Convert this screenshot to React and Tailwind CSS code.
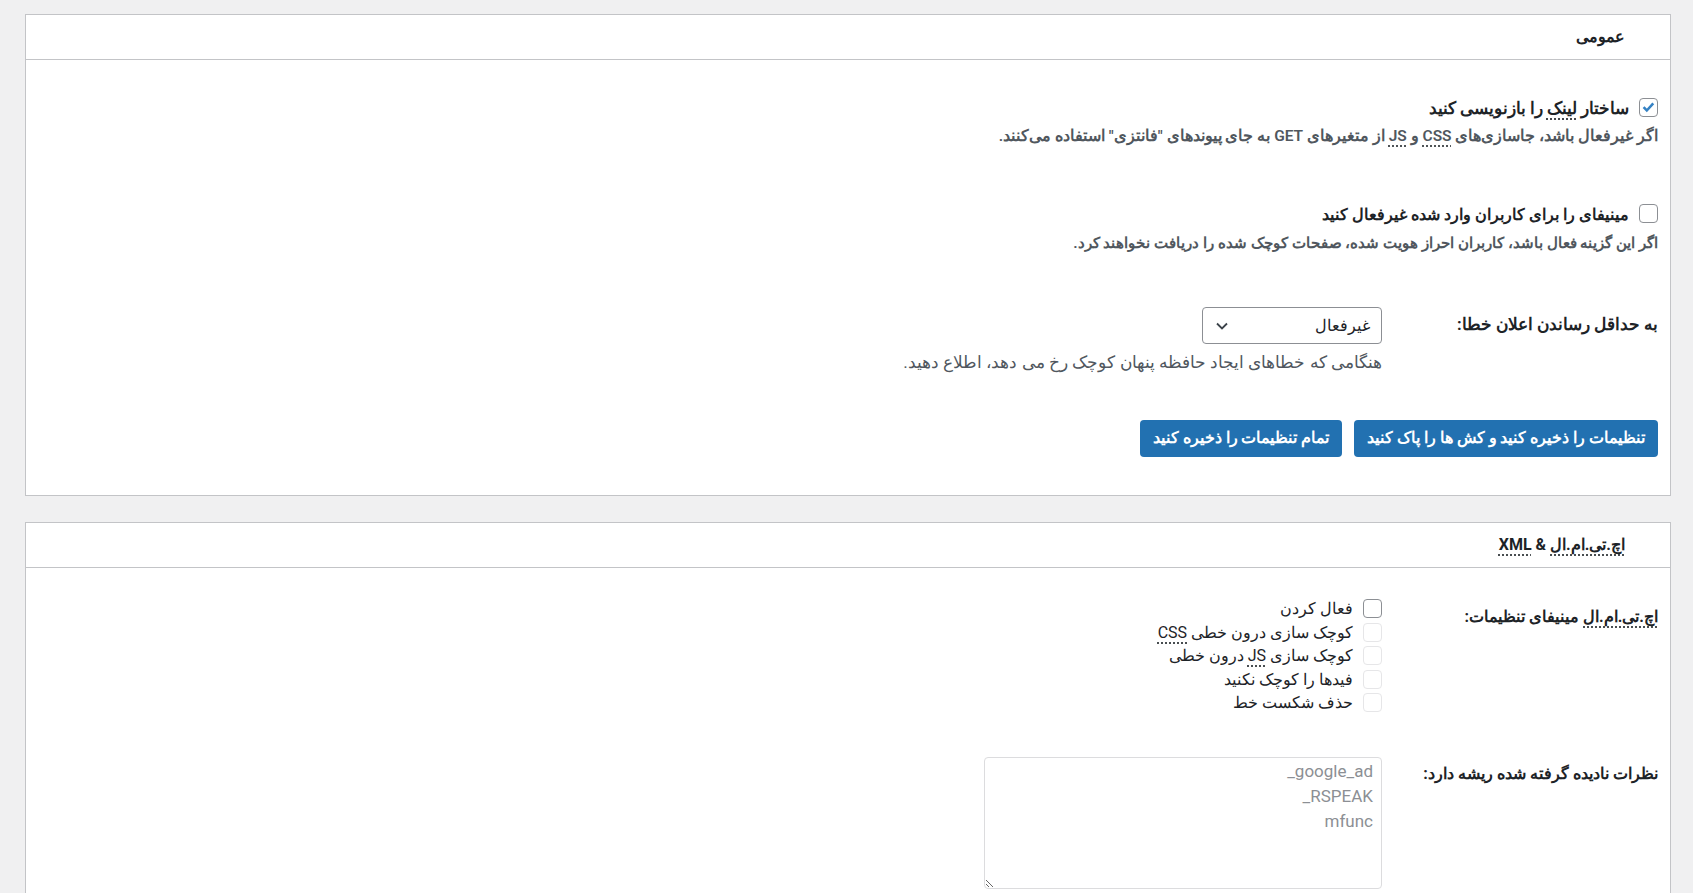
const Check = ({ checked, disabled }) => (
  <span
    className={`w-[19px] h-[19px] shrink-0 rounded-[4px] border bg-white flex items-center justify-center ${
      disabled ? "border-[#e6e6e8]" : "border-[#8c8f94]"
    }`}>
    {checked && (
      <svg viewBox="0 0 20 20" className="w-[18px] h-[18px]">
        <path d="M4.2 10.2l3.8 3.9 7.6-8.4" fill="none" stroke="#3582c4" strokeWidth="3" strokeLinejoin="miter" />
      </svg>
    )}
  </span>
);

const Abbr = ({ children }) => (
  <span className="underline decoration-dotted decoration-[#1d2327] underline-offset-[5px]">{children}</span>
);

const minifyOptions = [
  { label: "فعال کردن", disabled: false },
  { label: <>کوچک سازی درون خطی <Abbr>CSS</Abbr></>, disabled: true },
  { label: <>کوچک سازی <Abbr>JS</Abbr> درون خطی</>, disabled: true },
  { label: "فیدها را کوچک نکنید", disabled: true },
  { label: "حذف شکست خط", disabled: true },
];

export default function App() {
  return (
    <div
      dir="rtl"
      className="min-h-screen bg-[#f0f0f1] pt-[14px] pr-[22px] pl-[25px] text-[#1d2327] [font-family:Roboto,sans-serif]">
      {/* general */}
      <section className="bg-white border border-[#c3c4c7]">
        <div className="h-[45px] border-b border-[#c3c4c7] px-[45px] flex items-center text-[16px] font-bold">
          عمومی
        </div>
        <div className="px-[12px] pt-[37px] pb-[38px]">
          <label className="flex items-center gap-[10px] h-[20px]">
            <Check checked />
            <span className="text-[16.5px] font-bold translate-y-[2px]">
              ساختار <Abbr>لینک</Abbr> را بازنویسی کنید
            </span>
          </label>
          <p className="mt-[8px] text-[15.5px] leading-[22px] font-semibold text-[#50575e]">
            اگر غیرفعال باشد، جاسازی‌های <Abbr>CSS</Abbr> و <Abbr>JS</Abbr> از متغیرهای GET به جای پیوندهای "فانتزی" استفاده می‌کنند.
          </p>

          <label className="mt-[56px] flex items-center gap-[10px] h-[20px]">
            <Check />
            <span className="text-[16px] font-bold translate-y-[2px]">مینیفای را برای کاربران وارد شده غیرفعال کنید</span>
          </label>
          <p className="mt-[9px] text-[15.4px] leading-[22px] font-semibold text-[#50575e]">
            اگر این گزینه فعال باشد، کاربران احراز هویت شده، صفحات کوچک شده را دریافت نخواهند کرد.
          </p>

          <div className="mt-[53px] flex">
            <div className="w-[266px] h-[37px] flex items-center text-[16.5px] font-bold">به حداقل رساندن اعلان خطا:</div>
            <div className="pr-[10px]">
              <div className="w-[180px] h-[37px] border border-[#8c8f94] rounded-[4px] flex items-center justify-between pr-[11px] pl-[13px] text-[16px]">
                <span>غیرفعال</span>
                <svg viewBox="0 0 12 8" className="w-[12px] h-[8px]">
                  <path d="M1 1.5l5 5 5-5" fill="none" stroke="#3c434a" strokeWidth="1.8" />
                </svg>
              </div>
              <p className="mt-[7px] text-[17.3px] leading-[22px] text-[#50575e]">
                هنگامی که خطاهای ایجاد حافظه پنهان کوچک رخ می دهد، اطلاع دهید.
              </p>
            </div>
          </div>

          <div className="mt-[47px] flex gap-[12px]">
            <button className="h-[37px] px-[13px] rounded-[4px] bg-[#2271b1] text-white text-[15.5px] font-semibold">
              تنظیمات را ذخیره کنید و کش ها را پاک کنید
            </button>
            <button className="h-[37px] px-[13px] rounded-[4px] bg-[#2271b1] text-white text-[15.5px] font-semibold">
              تمام تنظیمات را ذخیره کنید
            </button>
          </div>
        </div>
      </section>

      {/* html & xml */}
      <section className="mt-[26px] bg-white border border-[#c3c4c7]">
        <div className="h-[45px] border-b border-[#c3c4c7] px-[45px] flex items-center text-[16px] font-bold">
          <span>
            <Abbr>اچ.تی.ام.ال</Abbr> &amp; <Abbr>XML</Abbr>
          </span>
        </div>
        <div className="px-[12px] pt-[31px] pb-[20px]">
          <div className="flex">
            <div className="w-[266px] pt-[7px] text-[16px] leading-[22px] font-bold">
              <Abbr>اچ.تی.ام.ال</Abbr> مینیفای تنظیمات:
            </div>
            <div className="pr-[10px] flex flex-col">
              {minifyOptions.map((opt, i) => (
                <label key={i} className="h-[23.5px] flex items-start gap-[10px] text-[16px] leading-[22px]">
                  <Check disabled={opt.disabled} />
                  <span className="-mt-[1px]">{opt.label}</span>
                </label>
              ))}
            </div>
          </div>

          <div className="mt-[40px] flex">
            <div className="w-[266px] pt-[6px] text-[16.2px] leading-[22px] font-bold">نظرات نادیده گرفته شده ریشه دارد:</div>
            <div className="pr-[10px]">
              <textarea
                dir="rtl"
                readOnly
                defaultValue={"google_ad_\nRSPEAK_\nmfunc"}
                className="block w-[398px] h-[132px] border border-[#dcdcde] rounded-[4px] px-[8px] py-[1px] text-[17px] leading-[25px] text-[#8c8f94] bg-white outline-none [font-family:Roboto,sans-serif]"
              />
            </div>
          </div>
        </div>
      </section>
    </div>
  );
}
